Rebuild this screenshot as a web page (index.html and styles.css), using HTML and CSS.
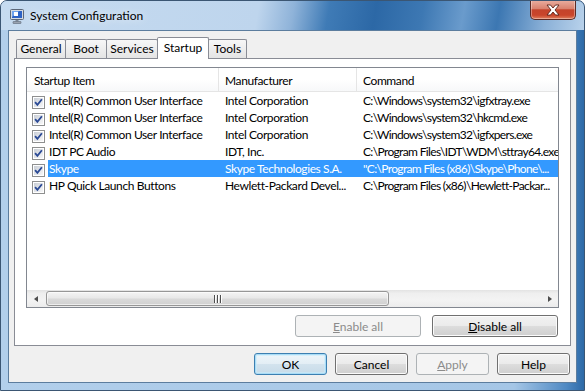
FILE: index.html
```html
<!DOCTYPE html>
<html lang="en">
<head>
    <meta charset="UTF-8">
    <title>System Configuration</title>
    <link rel="stylesheet" href="styles.css">
</head>
<body>

<svg class="svg-defs" width="0" height="0">
    <defs>
        <linearGradient id="chkbg" x1="0" y1="0" x2="1" y2="1">
            <stop offset="0" stop-color="#c9ced6"/>
            <stop offset="1" stop-color="#f7f7f8"/>
        </linearGradient>
        <symbol id="chk" viewBox="0 0 13 13">
            <rect x="0.5" y="0.5" width="12" height="12" fill="#fff" stroke="#8e8f8f"/>
            <rect x="2" y="2" width="9" height="9" fill="url(#chkbg)"/>
            <path d="M3.1 6.2 L5.4 8.9 L9.9 3.3" fill="none" stroke="#2b4a95" stroke-width="1.8"/>
        </symbol>
    </defs>
</svg>

<div class="window">
    <div class="titlebar">
        <svg class="app-icon" width="16" height="16" viewBox="0 0 16 16">
            <rect x="1.5" y="1.5" width="13" height="10" rx="1" fill="#d5dae1" stroke="#5b6677"/>
            <rect x="3" y="3" width="10" height="7" fill="#2d62c4"/>
            <path d="M3 3 H10 L3 9 Z" fill="#6fa3ee"/>
            <rect x="5" y="4" width="4" height="4" fill="#fff"/>
            <rect x="6.5" y="12" width="3" height="1.5" fill="#7d8694"/>
            <rect x="4" y="13.5" width="8" height="2" rx="0.5" fill="#9aa3b0" stroke="#5b6677" stroke-width="0.6"/>
        </svg>
        <span class="title">System Configuration</span>
        <div class="close-btn">
            <svg width="14" height="12" viewBox="-1 -1 14 12">
                <polygon points="0,0 3.5,0 6,3 8.5,0 12,0 8,5 12,10 8.5,10 6,7 3.5,10 0,10 4,5" fill="#fff" stroke="#5a2119" stroke-width="0.9"/>
            </svg>
        </div>
    </div>

    <div class="frame-body">
        <div class="client">
            <div class="tabs">
                <div class="tab tab-general">General</div>
                <div class="tab tab-boot">Boot</div>
                <div class="tab tab-services">Services</div>
                <div class="tab tab-startup active">Startup</div>
                <div class="tab tab-tools">Tools</div>
            </div>

            <div class="panel">
                <div class="listview">
                    <div class="lv-header">
                        <div class="col c1">Startup Item</div>
                        <div class="col c2">Manufacturer</div>
                        <div class="col c3">Command</div>
                    </div>
                    <div class="lv-body">
                        <div class="row">
                            <div class="col c1"><svg class="check"><use href="#chk"/></svg><span class="label">Intel(R) Common User Interface</span></div>
                            <div class="col c2">Intel Corporation</div>
                            <div class="col c3">C:\Windows\system32\igfxtray.exe</div>
                        </div>
                        <div class="row">
                            <div class="col c1"><svg class="check"><use href="#chk"/></svg><span class="label">Intel(R) Common User Interface</span></div>
                            <div class="col c2">Intel Corporation</div>
                            <div class="col c3">C:\Windows\system32\hkcmd.exe</div>
                        </div>
                        <div class="row">
                            <div class="col c1"><svg class="check"><use href="#chk"/></svg><span class="label">Intel(R) Common User Interface</span></div>
                            <div class="col c2">Intel Corporation</div>
                            <div class="col c3">C:\Windows\system32\igfxpers.exe</div>
                        </div>
                        <div class="row">
                            <div class="col c1"><svg class="check"><use href="#chk"/></svg><span class="label">IDT PC Audio</span></div>
                            <div class="col c2">IDT, Inc.</div>
                            <div class="col c3">C:\Program Files\IDT\WDM\sttray64.exe</div>
                        </div>
                        <div class="row selected">
                            <div class="col c1"><svg class="check"><use href="#chk"/></svg><span class="label">Skype</span></div>
                            <div class="col c2">Skype Technologies S.A.</div>
                            <div class="col c3">"C:\Program Files (x86)\Skype\Phone\...</div>
                        </div>
                        <div class="row">
                            <div class="col c1"><svg class="check"><use href="#chk"/></svg><span class="label">HP Quick Launch Buttons</span></div>
                            <div class="col c2">Hewlett-Packard Devel...</div>
                            <div class="col c3">C:\Program Files (x86)\Hewlett-Packar...</div>
                        </div>
                    </div>
                    <div class="hscroll">
                        <div class="sb-btn"><span class="arrow-left"></span></div>
                        <div class="sb-track">
                            <div class="sb-thumb">
                                <svg width="9" height="8" viewBox="0 0 9 8">
                                    <rect x="1" y="0" width="1" height="8" fill="#4d4d4d"/>
                                    <rect x="2" y="0" width="1" height="8" fill="#fff"/>
                                    <rect x="4" y="0" width="1" height="8" fill="#4d4d4d"/>
                                    <rect x="5" y="0" width="1" height="8" fill="#fff"/>
                                    <rect x="7" y="0" width="1" height="8" fill="#4d4d4d"/>
                                    <rect x="8" y="0" width="1" height="8" fill="#fff"/>
                                </svg>
                            </div>
                        </div>
                        <div class="sb-btn"><span class="arrow-right"></span></div>
                    </div>
                </div>

                <div class="panel-buttons">
                    <button class="btn wide disabled"><u>E</u>nable all</button>
                    <button class="btn wide"><u>D</u>isable all</button>
                </div>
            </div>

            <div class="dialog-buttons">
                <button class="btn default">OK</button>
                <button class="btn">Cancel</button>
                <button class="btn disabled"><u>A</u>pply</button>
                <button class="btn">Help</button>
            </div>
        </div>
    </div>
</div>

</body>
</html>
```

FILE: styles.css
```css
/* Windows 7 dialog: System Configuration */
* {
    box-sizing: border-box;
}
body {
    margin: 0;
    background-color: #fff;
    font-family: Lato, "Noto Sans", sans-serif;
    font-size: 12px;
    color: #000;
}
.svg-defs {
    display: block;
    width: 0;
    height: 0;
}

/* aero frame */
.window {
    width: 585px;
    height: 391px;
    border: 1px solid #3b5673;
    border-radius: 7px 7px 0 0;
    overflow: hidden;
    display: flex;
    flex-direction: column;
    background: linear-gradient(90deg, #b2cfeb 0%, #a5c6e6 88%, #4f89c3 97%, #2d6aa7 100%);
}
.titlebar {
    height: 29px;
    flex: none;
    display: flex;
    align-items: flex-start;
    padding-left: 8px;
    background: linear-gradient(100deg, #c6dbf0 0%, #bed5ed 44%, #8fb3d9 50%, #3f7bb6 56%, #2c68a6 64%, #3d78b3 72%, #6a9bcc 79%, #3c77b2 85%, #8ab0d7 93%, #b9d2eb 100%);
}
.app-icon {
    margin-top: 7px;
    flex: none;
}
.title {
    margin-left: 5px;
    margin-top: 7px;
    line-height: 16px;
    text-shadow: 0 0 8px rgba(255, 255, 255, 0.9);
}
.close-btn {
    flex: none;
    margin-left: auto;
    margin-right: 8px;
    margin-top: -1px;
    width: 46px;
    height: 20px;
    border: 1px solid #5b2a24;
    border-top: none;
    border-radius: 0 0 5px 5px;
    background: linear-gradient(#eab0a2 0%, #d9826f 45%, #c4432b 52%, #c9452b 80%, #e0805f 100%);
    box-shadow: inset 0 0 0 1px rgba(255, 255, 255, 0.35);
    display: flex;
    align-items: center;
    justify-content: center;
}

.frame-body {
    flex: 1;
    min-width: 0;
    display: flex;
    padding: 0 7px 7px;
}
.client {
    flex: 1;
    min-width: 0;
    display: flex;
    flex-direction: column;
    padding: 6px 5px 0;
    background-color: #f0f0f0;
    border: 1px solid #5c7d9e;
}

/* tabs */
.tabs {
    display: flex;
    align-items: flex-end;
    height: 21px;
    padding-left: 2px;
}
.tab {
    flex: none;
    height: 19px;
    margin-left: -1px;
    border: 1px solid #898c95;
    border-bottom: none;
    border-radius: 2px 2px 0 0;
    background: linear-gradient(#f7f7f7, #e4e4e4);
    display: flex;
    align-items: center;
    justify-content: center;
    padding-bottom: 1px;
}
.tab-general { width: 50px; margin-left: 0; }
.tab-boot { width: 42px; }
.tab-services { width: 52px; }
.tab-startup { width: 52px; }
.tab-tools { width: 39px; }
.tab.active {
    height: 22px;
    margin-bottom: -1px;
    background: #fff;
    position: relative;
    z-index: 2;
    padding-bottom: 3px;
}

.panel {
    height: 288px;
    min-width: 0;
    flex: none;
    display: flex;
    flex-direction: column;
    padding: 8px 11px 0;
    background-color: #fff;
    border: 1px solid #898c95;
}

/* list view */
.listview {
    height: 241px;
    min-width: 0;
    flex: none;
    display: flex;
    flex-direction: column;
    border: 1px solid #828790;
    overflow: hidden;
    letter-spacing: -0.4px;
}
.lv-header {
    height: 24px;
    flex: none;
    display: flex;
    border-bottom: 1px solid #e5e5e5;
    background: linear-gradient(#fff 0%, #fff 50%, #f7f8f9 100%);
}
.lv-header .col {
    display: flex;
    align-items: center;
    padding-top: 1px;
    padding-left: 6px;
}
.lv-header .c1,
.lv-header .c2 {
    border-right: 1px solid #e5e5e5;
}
.lv-header .c1 {
    padding-left: 7px;
}
.col {
    flex: none;
    white-space: nowrap;
    overflow: hidden;
}
.c1 { width: 192px; }
.c2 { width: 138px; }
.c3 { width: 201px; }
.row .c3 {
    letter-spacing: -0.65px;
}

.lv-body {
    flex: 1;
    overflow: hidden;
}
.row {
    display: flex;
    height: 17px;
    line-height: 17px;
}
.row .c1 {
    display: flex;
    padding-left: 5px;
}
.row .c2,
.row .c3 {
    padding-left: 6px;
}
.check {
    width: 13px;
    height: 13px;
    flex: none;
    margin-top: 4px;
}
.label {
    flex: 1;
    margin-left: 3px;
    padding-left: 1px;
}
.row.selected .label,
.row.selected .c2,
.row.selected .c3 {
    background-color: #3399ff;
    color: #fff;
}

/* horizontal scroll bar */
.hscroll {
    height: 17px;
    flex: none;
    display: flex;
    background: linear-gradient(#e3e3e3 0%, #efefef 20%, #f3f3f3 60%, #ececec 100%);
}
.sb-btn {
    width: 17px;
    flex: none;
    display: flex;
    align-items: center;
    justify-content: center;
}
.arrow-left {
    width: 0;
    height: 0;
    border-top: 3.5px solid transparent;
    border-bottom: 3.5px solid transparent;
    border-right: 4px solid #4d4d4d;
}
.arrow-right {
    width: 0;
    height: 0;
    border-top: 3.5px solid transparent;
    border-bottom: 3.5px solid transparent;
    border-left: 4px solid #4d4d4d;
}
.sb-track {
    flex: 1;
    min-width: 0;
    padding-left: 2px;
}
.sb-thumb {
    width: 343px;
    height: 15px;
    margin-top: 1px;
    border: 1px solid #969696;
    border-radius: 3px;
    background: linear-gradient(#f4f4f4 0%, #e8e8e8 45%, #d9d9d9 55%, #d1d1d1 100%);
    box-shadow: inset 0 0 0 1px rgba(255, 255, 255, 0.6);
    display: flex;
    align-items: center;
    justify-content: center;
}

/* buttons */
.panel-buttons {
    display: flex;
    justify-content: flex-end;
    gap: 11px;
    margin-top: 7px;
    padding-right: 1px;
}
.dialog-buttons {
    display: flex;
    justify-content: flex-end;
    gap: 8px;
    margin-top: 7px;
    padding-right: 1px;
}
.btn {
    font: inherit;
    width: 73px;
    height: 22px;
    padding: 0;
    color: #000;
    border: 1px solid #707070;
    border-radius: 3px;
    background: linear-gradient(#f2f2f2 0%, #ebebeb 49%, #dddddd 50%, #cfcfcf 100%);
    box-shadow: inset 0 0 0 1px #fbfbfb;
}
.btn.wide {
    width: 126px;
}
.btn.default {
    border-color: #3c7fb1;
    box-shadow: inset 0 0 0 1px #a9dcf6, inset 0 0 0 2px rgba(200, 235, 252, 0.6);
    background: linear-gradient(#eef5fa 0%, #e3eef5 49%, #d3e3ee 50%, #c7dbe8 100%);
}
.btn.disabled {
    color: #8b8b8b;
    border-color: #adb2b5;
    background: #f4f4f4;
    box-shadow: none;
}
.btn u {
    text-decoration: underline;
}
```
